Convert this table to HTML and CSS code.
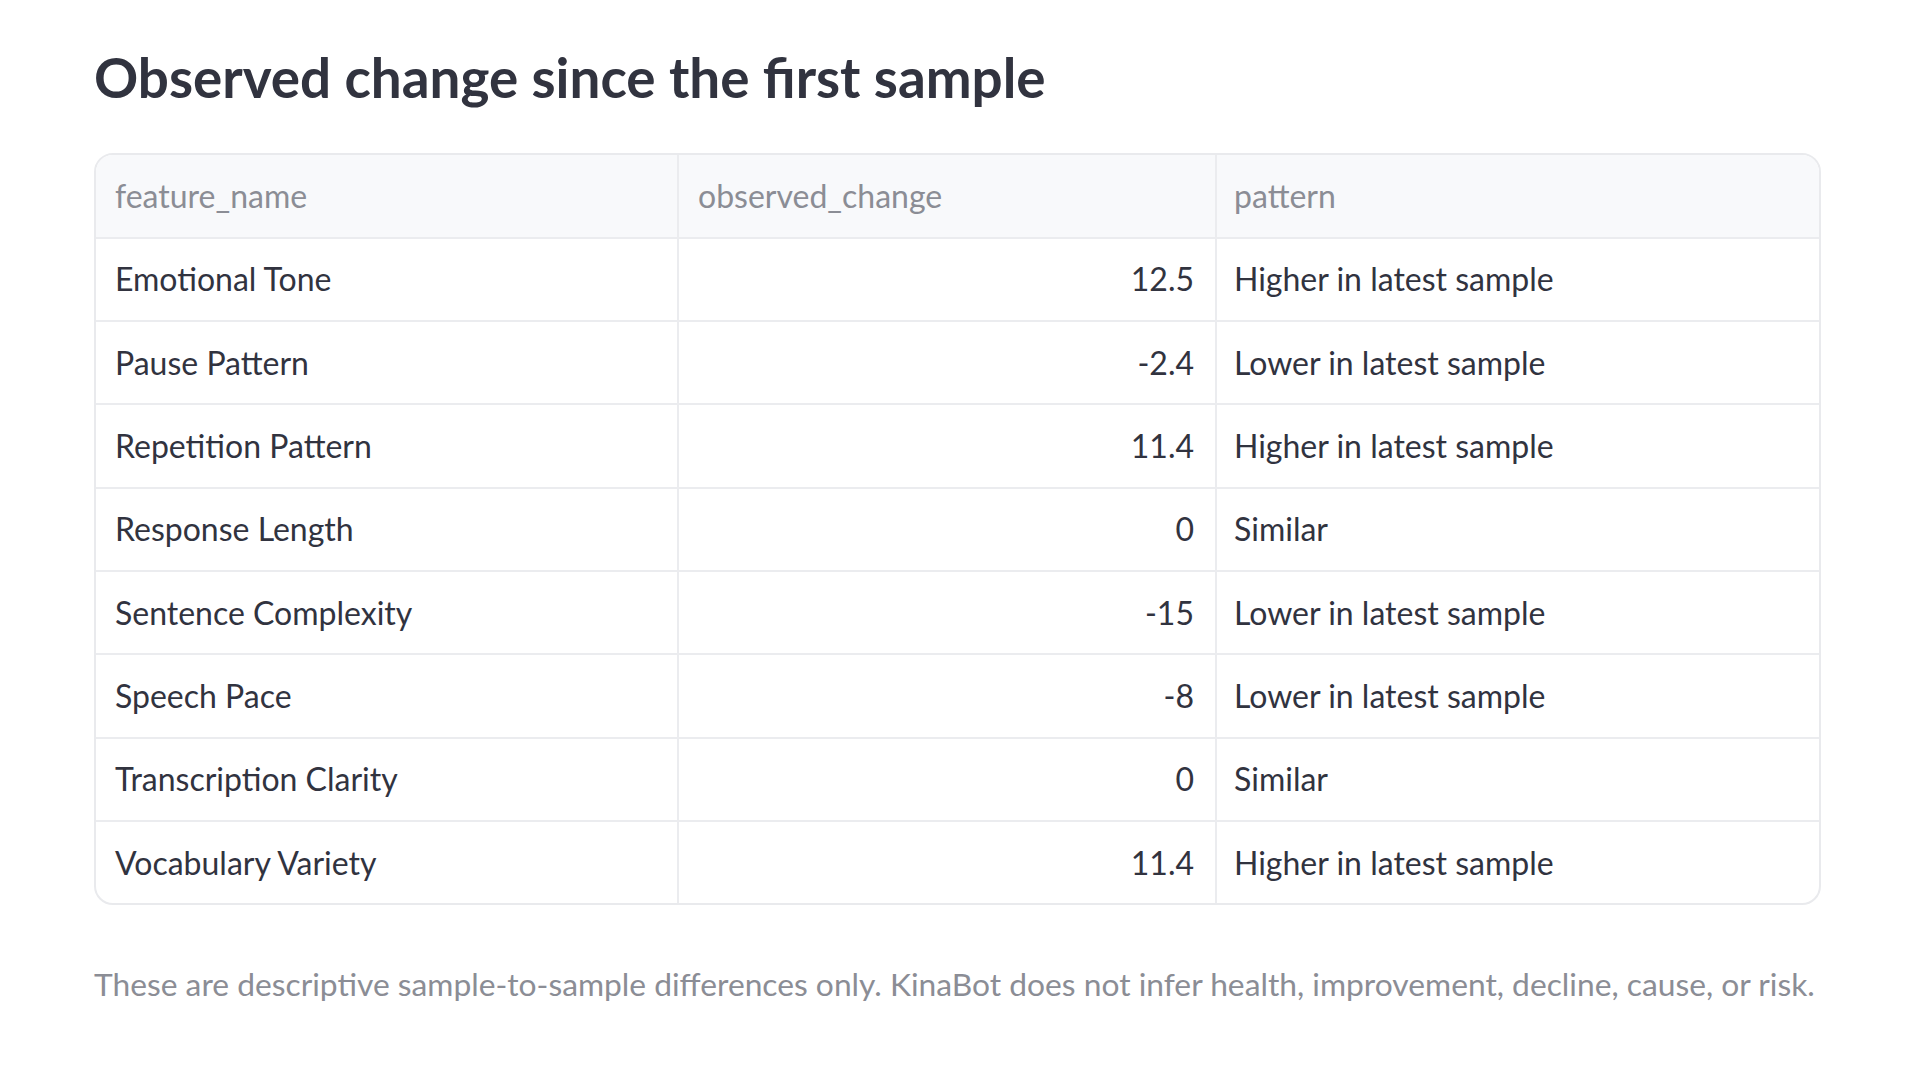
FILE: index.html
```html
<!DOCTYPE html>
<html lang="en">
<head>
<meta charset="utf-8">
<title>Observed change since the first sample</title>
<link rel="stylesheet" href="styles.css">
</head>
<body>
<main class="page">
  <h3 class="title">Observed change since the first sample</h3>
  <div class="table">
    <div class="row head">
      <div class="cell">feature_name</div>
      <div class="cell">observed_change</div>
      <div class="cell">pattern</div>
    </div>
    <div class="row">
      <div class="cell">Emotional Tone</div>
      <div class="cell num">12.5</div>
      <div class="cell">Higher in latest sample</div>
    </div>
    <div class="row">
      <div class="cell">Pause Pattern</div>
      <div class="cell num">-2.4</div>
      <div class="cell">Lower in latest sample</div>
    </div>
    <div class="row">
      <div class="cell">Repetition Pattern</div>
      <div class="cell num">11.4</div>
      <div class="cell">Higher in latest sample</div>
    </div>
    <div class="row">
      <div class="cell">Response Length</div>
      <div class="cell num">0</div>
      <div class="cell">Similar</div>
    </div>
    <div class="row">
      <div class="cell">Sentence Complexity</div>
      <div class="cell num">-15</div>
      <div class="cell">Lower in latest sample</div>
    </div>
    <div class="row">
      <div class="cell">Speech Pace</div>
      <div class="cell num">-8</div>
      <div class="cell">Lower in latest sample</div>
    </div>
    <div class="row">
      <div class="cell">Transcription Clarity</div>
      <div class="cell num">0</div>
      <div class="cell">Similar</div>
    </div>
    <div class="row last">
      <div class="cell">Vocabulary Variety</div>
      <div class="cell num">11.4</div>
      <div class="cell">Higher in latest sample</div>
    </div>
  </div>
  <p class="caption">These are descriptive sample-to-sample differences only. KinaBot does not infer health, improvement, decline, cause, or risk.</p>
</main>
</body>
</html>
```

FILE: styles.css
```css
html, body {
  margin: 0;
  padding: 0;
  background: #ffffff;
}

body {
  font-family: "Lato", "Liberation Sans", sans-serif;
  color: #31333f;
}

.page {
  padding: 45px 98px 0 94px;
}

.title {
  margin: 0;
  font-size: 54.8px;
  line-height: 1.2;
  font-weight: 700;
  color: #31333f;
}

.table {
  margin-top: 42px;
  width: 1723px;
  border: 2px solid #e9eaed;
  border-radius: 19px;
  overflow: hidden;
  display: flex;
  flex-direction: column;
}

.row {
  display: grid;
  grid-template-columns: 583px 538px 1fr;
  height: 83.33px;
  border-bottom: 2px solid #ebecef;
  box-sizing: border-box;
}

.row.head {
  height: 84px;
  background: #f8f9fb;
  color: #8b8d95;
}

.row.last {
  border-bottom: none;
  height: 81.33px;
}

.cell {
  display: flex;
  align-items: center;
  padding: 0 19px;
  font-size: 32px;
  line-height: 1.2;
  border-right: 2px solid #ebecef;
  white-space: nowrap;
  overflow: hidden;
}

.row.head .cell {
  padding-top: 1px;
}

.cell:last-child {
  border-right: none;
  padding-left: 17px;
}

.cell.num {
  justify-content: flex-end;
  padding-right: 21px;
}

.caption {
  margin: 60px 0 0 0;
  font-size: 31.75px;
  line-height: 1.2;
  color: #8b8d95;
  white-space: nowrap;
}
```
